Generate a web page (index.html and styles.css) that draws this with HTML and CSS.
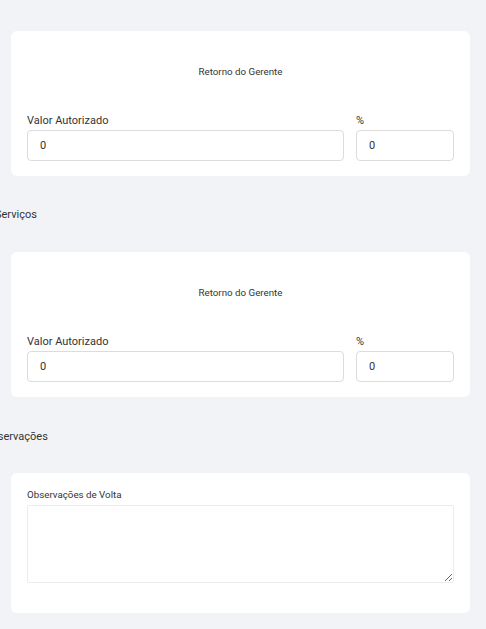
FILE: index.html
```html
<!DOCTYPE html>
<html lang="pt-BR">
<head>
<meta charset="utf-8">
<link rel="stylesheet" href="styles.css">
</head>
<body>
<main class="page">
  <section class="card">
    <div class="card-title">Retorno do Gerente</div>
    <div class="row">
      <div class="field field-main">
        <label class="label">Valor Autorizado</label>
        <input class="input" type="text" value="0">
      </div>
      <div class="field field-pct">
        <label class="label">%</label>
        <input class="input" type="text" value="0">
      </div>
    </div>
  </section>

  <h2 class="section-title section-servicos">Serviços</h2>

  <section class="card">
    <div class="card-title">Retorno do Gerente</div>
    <div class="row">
      <div class="field field-main">
        <label class="label">Valor Autorizado</label>
        <input class="input" type="text" value="0">
      </div>
      <div class="field field-pct">
        <label class="label">%</label>
        <input class="input" type="text" value="0">
      </div>
    </div>
  </section>

  <h2 class="section-title section-obs">Observações</h2>

  <section class="card card-obs">
    <label class="small-label">Observações de Volta</label>
    <textarea class="textarea"></textarea>
  </section>
</main>
</body>
</html>
```

FILE: styles.css
```css
* { box-sizing: border-box; }
html, body {
  margin: 0;
  padding: 0;
  background: #f2f3f7;
  font-family: Roboto, "Liberation Sans", sans-serif;
  color: #333;
  overflow: hidden;
}
.page {
  padding: 31px 16px 0 11px;
  display: flex;
  flex-direction: column;
}
.card {
  background: #fff;
  border-radius: 6px;
  padding: 16px 16px 15px 16px;
  display: flex;
  flex-direction: column;
}
.card-title {
  text-align: center;
  font-size: 9.75px;
  line-height: 14px;
  margin-top: 18px;
  margin-bottom: 35px;
  color: #333;
}
.row {
  display: flex;
  gap: 12px;
}
.field {
  display: flex;
  flex-direction: column;
  gap: 2px;
}
.field-main { flex: 1; }
.field-pct { width: 98px; }
.label {
  font-size: 11px;
  line-height: 14px;
  color: #333;
}
.input {
  height: 31px;
  border: 1px solid #dcdcdc;
  border-radius: 4px;
  padding: 0 12px;
  font-family: inherit;
  font-size: 11px;
  color: #333;
  outline: none;
  background: #fff;
}
.section-title {
  margin: 32px 0 30px 0;
  font-size: 11px;
  line-height: 14px;
  font-weight: 400;
  color: #333;
}
.section-servicos { margin-left: -16px; }
.section-obs { margin-left: -27px; margin-top: 33px; margin-bottom: 29px; }
.card-obs {
  padding: 15px 16px 30px 16px;
  gap: 3px;
}
.small-label {
  font-size: 9.75px;
  line-height: 14px;
  color: #333;
}
.textarea {
  height: 78px;
  border: 1px solid #ececec;
  border-radius: 2px;
  resize: vertical;
  font-family: inherit;
  outline: none;
}
```
